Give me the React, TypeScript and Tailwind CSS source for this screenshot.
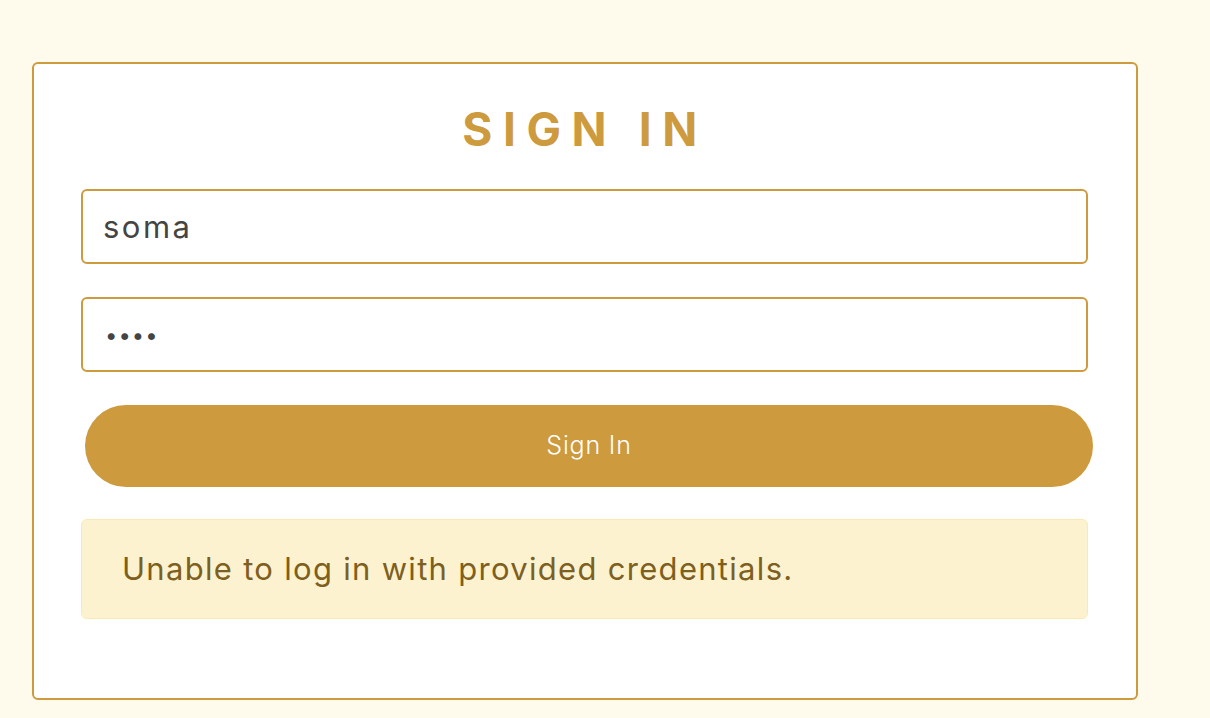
import React from "react";

const font = { fontFamily: "Inter, 'Noto Sans', sans-serif" };

const App = () => {
  return (
    <div className="min-h-screen w-full bg-[#fffbec] pt-[62px] pl-[32px]" style={font}>
      <div className="w-[1106px] h-[638px] bg-white border-2 border-[#cd9a3e] rounded-md pt-[34px] px-[47px]">
        <h1 className="h-[62px] flex items-center justify-center text-[46px] font-bold tracking-[0.23em] text-[#cd9a3e]">
          SIGN IN
        </h1>
        <form className="flex flex-col mt-[29px]" onSubmit={(e) => e.preventDefault()}>
          <input
            type="text"
            defaultValue="soma"
            className="w-[1007px] h-[75px] border-2 border-[#cd9a3e] rounded-md px-[20px] text-[31px] tracking-[2.5px] text-[#444] outline-none"
          />
          <input
            type="password"
            defaultValue="soma"
            className="mt-[33px] w-[1007px] h-[75px] border-2 border-[#cd9a3e] rounded-md px-[22px] text-[22px] tracking-[1px] text-[#444] outline-none"
          />
          <button
            type="submit"
            className="mt-[33px] ml-[4px] w-[1008px] h-[82px] rounded-full bg-[#cd9a3e] text-white text-[25px] tracking-[0.8px] font-light"
          >
            Sign In
          </button>
          <div className="mt-[32px] w-[1007px] h-[100px] flex items-center bg-[#fdf2d0] border border-[#fbeab0] rounded-md pl-[40px] text-[31px] tracking-[1.3px] text-[#7d5f20]">
            Unable to log in with provided credentials.
          </div>
        </form>
      </div>
    </div>
  );
};

export default App;
